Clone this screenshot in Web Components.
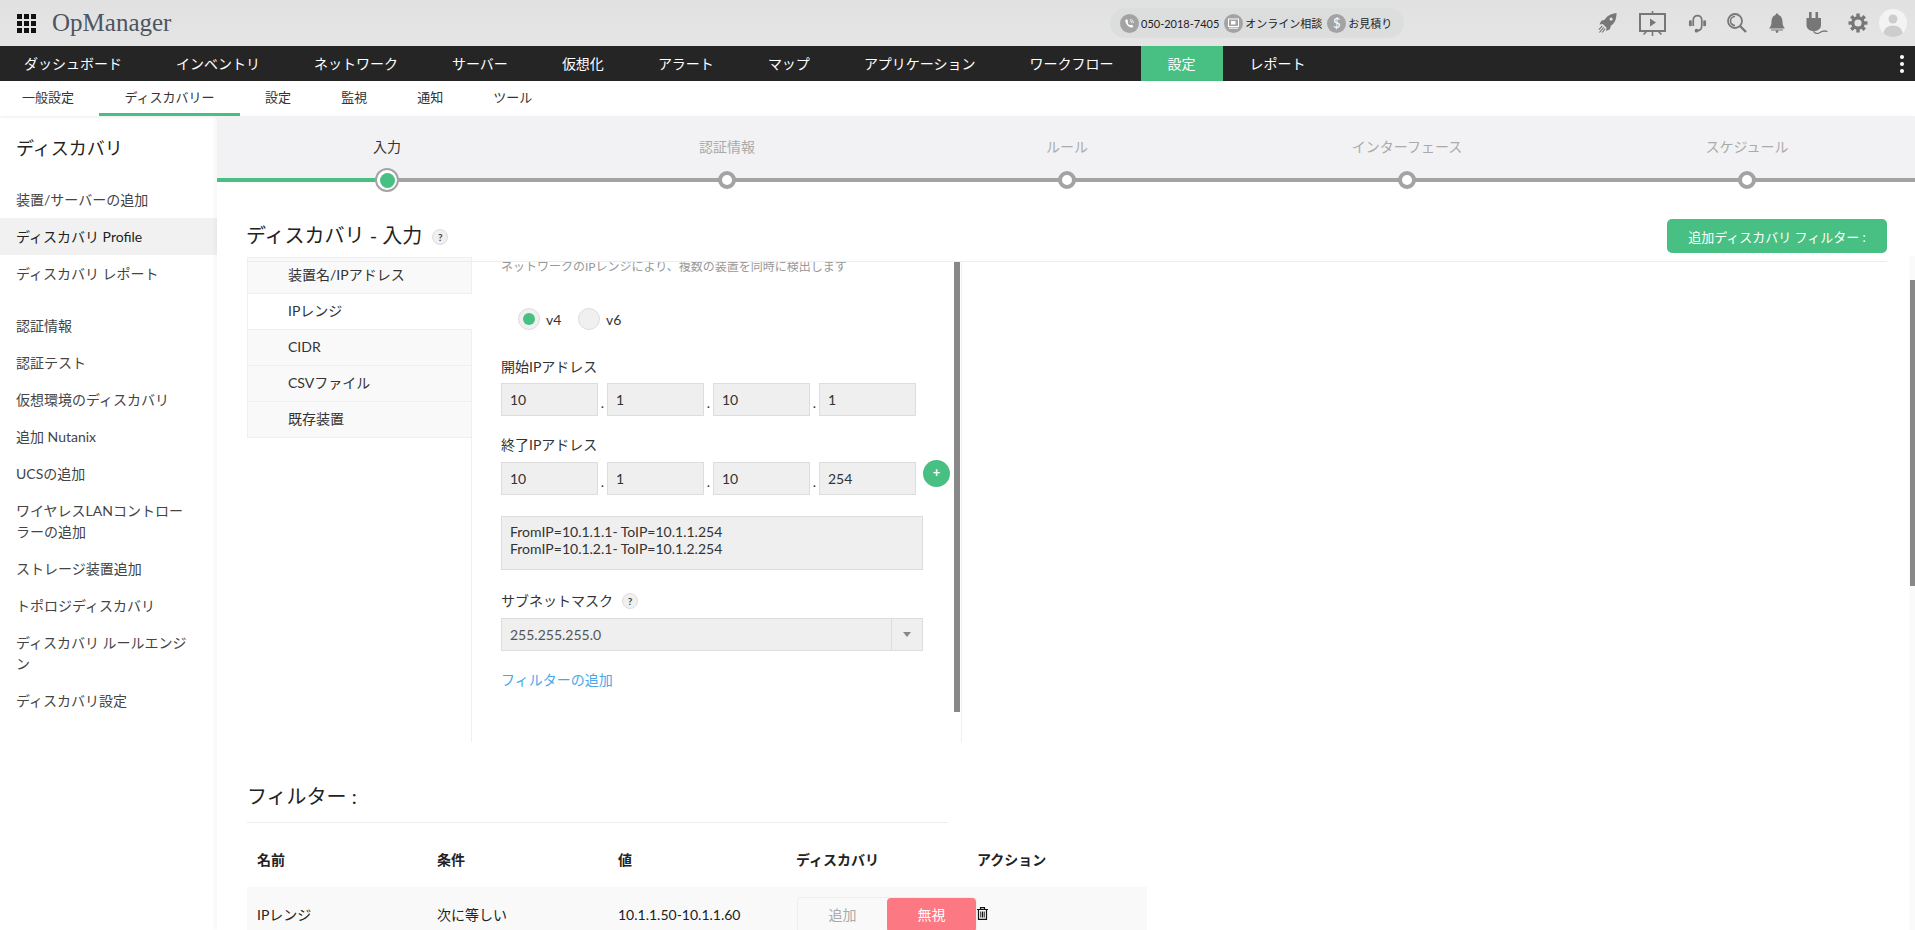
<!DOCTYPE html>
<html lang="ja">
<head>
<meta charset="utf-8">
<title>OpManager</title>
<style>
  html, body { margin: 0; height: 930px; overflow: hidden; background: #fff; }
  body { font-family: Lato, "Noto Sans CJK JP", sans-serif; font-size: 14px; color: #333; }
</style>
</head>
<body>
<op-app></op-app>
<script>
const GREEN = '#48bf83';

const ICONS = {
  rocket: `<svg width="19" height="22" viewBox="0 0 20 22"><path fill="#777" d="M19.5 .5C14 1 9.500 3.500 7 7.500L3.500 8.500 1.500 12.500 5 12 9 16 8.500 19.500 12.500 17.500 13.500 14C18 11.500 19.500 6 19.500 .5Z"/><circle cx="13.800" cy="6.800" r="1.700" fill="#e3e3e3"/><path stroke="#777" stroke-width="1.200" d="M4.500 14 1 18M6 15.500 1.500 21M7.500 17 4.500 21"/></svg>`,
  screen: `<svg width="27" height="25" viewBox="0 0 27 25"><g fill="none" stroke="#777"><rect x="1" y="3" width="25" height="17" stroke-width="2"/><path stroke-width="1.600" d="M13.500 0V3M13.500 20V25M8 20 4.500 23.500M19 20 22.500 23.500"/></g><path fill="#777" d="M11 7.500 17 11.500 11 15.500Z"/></svg>`,
  headset: `<svg width="19" height="21" viewBox="0 0 20 21"><g fill="none" stroke="#777" stroke-width="1.800"><path d="M5.500 13V7C5.500 .5 14.500 .5 14.500 7V12.500C14.500 16 12.500 18 9.500 18"/></g><rect x="1" y="7" width="3" height="6.500" rx="1.300" fill="#777"/><rect x="16" y="7" width="3" height="6.500" rx="1.300" fill="#777"/><circle cx="9" cy="18" r="2" fill="#777"/></svg>`,
  search: `<svg width="20" height="20" viewBox="0 0 20 20"><g fill="none" stroke="#777"><circle cx="8" cy="8" r="7" stroke-width="1.800"/><path stroke-width="1.600" d="M8 3.500A4.500 4.500 0 0 0 8 12.500"/><path stroke-width="2.400" d="M13 13 19 19"/></g></svg>`,
  bell: `<svg width="16" height="20" viewBox="0 0 16 20"><path fill="#777" d="M8 .5C9 .5 9.400 1.200 9.400 2 12.500 3 13.500 6 13.500 9 13.500 12 14.500 14 16 15.500H0C1.500 14 2.500 12 2.500 9 2.500 6 3.500 3 6.600 2 6.600 1.200 7 .5 8 .5Z"/><rect x="2" y="16.500" width="12" height="1" fill="#777"/><circle cx="8" cy="18.600" r="1.300" fill="#777"/></svg>`,
  plug: `<svg width="22" height="22" viewBox="0 0 22 22"><g fill="#777"><rect x="3" y="0" width="2.600" height="6.500"/><rect x="9.500" y="0" width="2.600" height="6.500"/><path d="M.5 6H15V13C15 17 11.500 19 7.700 19 4 19 .5 17 .5 13Z"/></g><path fill="none" stroke="#777" stroke-width="1.300" d="M7.500 18.500C8 22 12 22 14 20.500 16 19 18.500 18.500 21.500 19.500"/></svg>`,
  gear: `<svg width="20" height="20" viewBox="0 0 20 20"><g fill="none" stroke="#777"><circle cx="10" cy="10" r="5.200" stroke-width="3.200"/><g stroke-width="3.400"><path d="M10 .5V4"/><path d="M10 .5V4" transform="rotate(45 10 10)"/><path d="M10 .5V4" transform="rotate(90 10 10)"/><path d="M10 .5V4" transform="rotate(135 10 10)"/><path d="M10 .5V4" transform="rotate(180 10 10)"/><path d="M10 .5V4" transform="rotate(225 10 10)"/><path d="M10 .5V4" transform="rotate(270 10 10)"/><path d="M10 .5V4" transform="rotate(315 10 10)"/></g></g></svg>`,
  avatar: `<svg width="28" height="28" viewBox="0 0 28 28"><defs><clipPath id="a"><circle cx="14" cy="14" r="14"/></clipPath></defs><circle cx="14" cy="14" r="14" fill="#f3f3f3"/><g clip-path="url(#a)" fill="#cdcdcd"><circle cx="14" cy="10" r="4.500"/><path d="M4 28C4 20 8 16.500 14 16.500S24 20 24 28Z"/></g></svg>`,
  phone: `<svg width="19" height="19" viewBox="0 0 19 19"><circle cx="9.500" cy="9.500" r="9.500" fill="#a3a3a3"/><path fill="#fff" d="M5.500 6C6 5.300 6.800 5 7.200 5.600L8 7.200C8.200 7.700 7.800 8 7.500 8.400 7.800 9.500 9 10.800 10.200 11.300 10.600 11 11 10.500 11.500 10.800L13 11.800C13.500 12.200 13.200 12.900 12.600 13.300 11.500 14 9.500 13.500 7.800 11.800 6 10 5 7.500 5.500 6Z"/><path fill="none" stroke="#fff" stroke-width=".8" d="M10 5.500A3.500 3.500 0 0 1 13.500 9M10 7.200A1.800 1.800 0 0 1 11.800 9"/></svg>`,
  video: `<svg width="19" height="19" viewBox="0 0 19 19"><circle cx="9.500" cy="9.500" r="9.500" fill="#a3a3a3"/><rect x="4.500" y="5" width="10" height="7.500" fill="none" stroke="#fff"/><rect x="7" y="7" width="4.500" height="3.500" fill="#fff"/><path stroke="#fff" d="M5 14.200H14"/></svg>`,
  trash: `<svg width="11" height="13" viewBox="0 0 11 13"><g fill="none" stroke="#111"><path stroke-width="1.200" d="M0 2.500H11M3.500 2.500V.7H7.500V2.500"/><path stroke-width="1.200" d="M1.500 2.500V12.400H9.500V2.500"/><path d="M3.800 4.500V10.500M5.500 4.500V10.500M7.200 4.500V10.500"/></g></svg>`
};

class OpIcon extends HTMLElement {
  constructor() {
    super();
    this.attachShadow({ mode: 'open' });
  }

  connectedCallback() {
    this.shadowRoot.innerHTML = `
      <style>
        :host { display: inline-flex; flex: none; }
        svg { display: block; }
      </style>
      ${ICONS[this.getAttribute('name')]}
    `;
  }
}

class OpContact extends HTMLElement {
  constructor() {
    super();
    this.attachShadow({ mode: 'open' });
    this.shadowRoot.innerHTML = `
      <style>
        :host {
          display: flex;
          align-items: center;
          box-sizing: border-box;
          width: 294px;
          height: 30px;
          margin-left: 937px;
          padding: 0 0 0 10px;
          border-radius: 15px;
          background: #dcdddd;
          color: #222;
          font-size: 11px;
          white-space: nowrap;
        }
        .item { display: flex; align-items: center; gap: 2px; margin-right: 5px; }
        .item:last-child { margin-right: 0; }
        .dollar {
          width: 19px;
          height: 19px;
          border-radius: 50%;
          background: #a3a3a3;
          color: #fff;
          font-size: 13px;
          line-height: 19px;
          text-align: center;
        }
      </style>
      <span class="item"><op-icon name="phone"></op-icon>050-2018-7405</span>
      <span class="item"><op-icon name="video"></op-icon>オンライン相談</span>
      <span class="item"><span class="dollar">$</span>お見積り</span>
    `;
  }
}

class OpHeader extends HTMLElement {
  constructor() {
    super();
    this.attachShadow({ mode: 'open' });
    this.shadowRoot.innerHTML = `
      <style>
        :host {
          display: flex;
          align-items: center;
          height: 46px;
          background: linear-gradient(#e1e1e2, #e5e5e6);
        }
        .apps {
          display: grid;
          flex: none;
          grid-template-columns: repeat(3, 5px);
          grid-auto-rows: 5px;
          gap: 2px;
          margin-left: 17px;
        }
        .apps i { background: #111; }
        .brand {
          flex: none;
          margin-left: 16px;
          width: 121px;
          font-family: "Liberation Serif", serif;
          font-size: 25px;
          color: #4d5560;
          white-space: nowrap;
        }
        .i1 { margin-left: 194px; }
        .i2 { margin-left: 22px; }
        .i3 { margin-left: 22px; }
        .i4 { margin-left: 20px; }
        .i5 { margin-left: 22px; }
        .i6 { margin-left: 21px; }
        .i7 { margin-left: 20px; }
        .i8 { margin-left: 11px; }
      </style>
      <div class="apps"><i></i><i></i><i></i><i></i><i></i><i></i><i></i><i></i><i></i></div>
      <div class="brand">OpManager</div>
      <slot></slot>
      <op-icon class="i1" name="rocket"></op-icon>
      <op-icon class="i2" name="screen"></op-icon>
      <op-icon class="i3" name="headset"></op-icon>
      <op-icon class="i4" name="search"></op-icon>
      <op-icon class="i5" name="bell"></op-icon>
      <op-icon class="i6" name="plug"></op-icon>
      <op-icon class="i7" name="gear"></op-icon>
      <op-icon class="i8" name="avatar"></op-icon>
    `;
  }
}

class OpNav extends HTMLElement {
  constructor() {
    super();
    this.attachShadow({ mode: 'open' });
    this.shadowRoot.innerHTML = `
      <style>
        :host {
          display: flex;
          height: 35px;
          background: #252525;
          color: #fff;
          white-space: nowrap;
        }
        .more {
          display: flex;
          flex-direction: column;
          justify-content: center;
          gap: 3px;
          margin-left: auto;
          margin-right: 11px;
        }
        .more i { width: 4px; height: 4px; border-radius: 50%; background: #fff; }
      </style>
      <slot></slot>
      <div class="more"><i></i><i></i><i></i></div>
    `;
  }
}

class OpNavItem extends HTMLElement {
  constructor() {
    super();
    this.attachShadow({ mode: 'open' });
    this.shadowRoot.innerHTML = `
      <style>
        :host { display: block; padding: 0 27px; line-height: 35px; font-size: 14px; }
        :host(:first-child) { padding-left: 24px; }
        :host([active]) { background: ${GREEN}; }
      </style>
      <slot></slot>
    `;
  }
}

class OpSubnav extends HTMLElement {
  constructor() {
    super();
    this.attachShadow({ mode: 'open' });
    this.shadowRoot.innerHTML = `
      <style>
        :host {
          display: flex;
          height: 35px;
          background: #fff;
          box-shadow: 0 1px 3px rgba(0, 0, 0, .08);
          position: relative;
          white-space: nowrap;
        }
      </style>
      <slot></slot>
    `;
  }
}

class OpSubnavItem extends HTMLElement {
  constructor() {
    super();
    this.attachShadow({ mode: 'open' });
    this.shadowRoot.innerHTML = `
      <style>
        :host {
          display: block;
          box-sizing: border-box;
          height: 35px;
          padding: 0 25px;
          line-height: 33px;
          font-size: 13px;
          color: #333;
        }
        :host(:first-child) { padding-left: 22px; }
        :host([active]) { padding: 0 25.500px; border-bottom: 3px solid ${GREEN}; }
      </style>
      <slot></slot>
    `;
  }
}

class OpSidebar extends HTMLElement {
  constructor() {
    super();
    this.attachShadow({ mode: 'open' });
    this.shadowRoot.innerHTML = `
      <style>
        :host {
          display: block;
          flex: none;
          width: 217px;
          padding-top: 20px;
          box-sizing: border-box;
          background: #fff;
        }
        h2 {
          margin: 0 0 21px;
          padding-left: 16px;
          font-size: 18px;
          font-weight: 400;
          line-height: 24px;
          color: #222;
        }
      </style>
      <h2>ディスカバリ</h2>
      <slot></slot>
    `;
  }
}

class OpSideItem extends HTMLElement {
  constructor() {
    super();
    this.attachShadow({ mode: 'open' });
    this.shadowRoot.innerHTML = `
      <style>
        :host {
          display: block;
          padding: 8px 25px 8px 16px;
          font-size: 14px;
          line-height: 21px;
          color: #444;
        }
        :host([active]) { background: #f1f1f1; color: #222; }
        :host([gap]) { margin-top: 15px; }
      </style>
      <slot></slot>
    `;
  }
}

class OpStepper extends HTMLElement {
  constructor() {
    super();
    this.attachShadow({ mode: 'open' });
    this.shadowRoot.innerHTML = `
      <style>
        :host {
          display: grid;
          grid-template-columns: repeat(5, 340px);
          height: 62px;
          background: #f2f2f4;
          border-bottom: 4px solid #a3a3a3;
        }
      </style>
      <slot></slot>
    `;
  }
}

class OpStep extends HTMLElement {
  constructor() {
    super();
    this.attachShadow({ mode: 'open' });
    this.shadowRoot.innerHTML = `
      <style>
        :host {
          display: block;
          position: relative;
          padding-top: 21px;
          text-align: center;
          font-size: 14px;
          line-height: 20px;
          color: #aaa;
        }
        .node {
          position: absolute;
          left: 50%;
          bottom: -11px;
          box-sizing: border-box;
          width: 18px;
          height: 18px;
          margin-left: -9px;
          border: 4px solid #a3a3a3;
          border-radius: 50%;
          background: #fff;
        }
        :host([active]) { color: #333; }
        :host([active])::before {
          content: "";
          position: absolute;
          left: 0;
          bottom: -4px;
          width: 50%;
          height: 4px;
          background: ${GREEN};
        }
        :host([active]) .node {
          width: 24px;
          height: 24px;
          bottom: -14px;
          margin-left: -12px;
          border-width: 2px;
        }
        :host([active]) .node::after {
          content: "";
          position: absolute;
          inset: 2.500px;
          border-radius: 50%;
          background: ${GREEN};
        }
      </style>
      <slot></slot>
      <span class="node"></span>
    `;
  }
}

class OpHelp extends HTMLElement {
  constructor() {
    super();
    this.attachShadow({ mode: 'open' });
    this.shadowRoot.innerHTML = `
      <style>
        :host {
          display: inline-block;
          box-sizing: border-box;
          width: 16px;
          height: 16px;
          border: 1px solid #ddd;
          border-radius: 50%;
          background: #f0f0f0;
          color: #444;
          font-size: 10px;
          font-weight: 700;
          line-height: 14px;
          text-align: center;
        }
      </style>
      ?
    `;
  }
}

class OpTabs extends HTMLElement {
  constructor() {
    super();
    this.attachShadow({ mode: 'open' });
    this.shadowRoot.innerHTML = `
      <style>
        :host {
          display: flex;
          flex-direction: column;
          flex: none;
          box-sizing: border-box;
          width: 225px;
          border-top: 1px solid #efefef;
        }
        .fill { flex: 1; border-right: 1px solid #efefef; }
      </style>
      <slot></slot>
      <div class="fill"></div>
    `;
  }
}

class OpTab extends HTMLElement {
  constructor() {
    super();
    this.attachShadow({ mode: 'open' });
    this.shadowRoot.innerHTML = `
      <style>
        :host {
          display: block;
          box-sizing: border-box;
          height: 36px;
          padding-left: 40px;
          border-left: 1px solid #efefef;
          border-right: 1px solid #efefef;
          border-bottom: 1px solid #efefef;
          background: #f9f9f9;
          font-size: 14px;
          line-height: 34px;
          color: #333;
        }
        :host([active]) { background: #fff; border-right-color: #fff; }
      </style>
      <slot></slot>
    `;
  }
}

class OpRadio extends HTMLElement {
  constructor() {
    super();
    this.attachShadow({ mode: 'open' });
    this.shadowRoot.innerHTML = `
      <style>
        :host { display: flex; align-items: center; gap: 6px; font-size: 14px; color: #333; }
        .dot {
          display: flex;
          align-items: center;
          justify-content: center;
          box-sizing: border-box;
          width: 22px;
          height: 22px;
          border: 1px solid #ddd;
          border-radius: 50%;
          background: #f0f0f0;
        }
        :host([checked]) .dot::after {
          content: "";
          width: 12px;
          height: 12px;
          border-radius: 50%;
          background: ${GREEN};
        }
      </style>
      <span class="dot"></span>
      <slot></slot>
    `;
  }
}

class OpIpRow extends HTMLElement {
  constructor() {
    super();
    this.attachShadow({ mode: 'open' });
  }

  connectedCallback() {
    const parts = this.getAttribute('value').split('.');
    this.shadowRoot.innerHTML = `
      <style>
        :host { display: flex; position: relative; height: 33px; margin-top: var(--top, 6px); }
        .octet {
          box-sizing: border-box;
          width: 97px;
          height: 33px;
          padding-left: 8px;
          border: 1px solid #ddd;
          background: #efefef;
          font-size: 14px;
          line-height: 31px;
          color: #333;
        }
        .sep { width: 9px; height: 33px; text-align: center; font-size: 14px; line-height: 40px; color: #333; }
        ::slotted(*) { position: absolute; left: 422px; top: -2px; }
      </style>
      ${parts.map(p => `<div class="octet">${p}</div>`).join('<div class="sep">.</div>')}
      <slot></slot>
    `;
  }
}

class OpAddButton extends HTMLElement {
  constructor() {
    super();
    this.attachShadow({ mode: 'open' });
    this.shadowRoot.innerHTML = `
      <style>
        :host {
          display: block;
          width: 27px;
          height: 27px;
          border-radius: 50%;
          background: ${GREEN};
          color: #fff;
          font-size: 13px;
          font-weight: 700;
          line-height: 25px;
          text-align: center;
        }
      </style>
      +
    `;
  }
}

class OpSelect extends HTMLElement {
  constructor() {
    super();
    this.attachShadow({ mode: 'open' });
    this.shadowRoot.innerHTML = `
      <style>
        :host {
          display: flex;
          box-sizing: border-box;
          width: 422px;
          height: 33px;
          border: 1px solid #ddd;
          background: #efefef;
          font-size: 14px;
          line-height: 31px;
          color: #555;
        }
        .value { flex: 1; padding-left: 8px; }
        .arrow {
          display: flex;
          align-items: center;
          justify-content: center;
          width: 30px;
          border-left: 1px solid #ddd;
        }
        .arrow::after {
          content: "";
          border: 4px solid transparent;
          border-top: 5px solid #888;
          border-bottom: 0;
        }
      </style>
      <div class="value"><slot></slot></div>
      <div class="arrow"></div>
    `;
  }
}

class OpIpForm extends HTMLElement {
  constructor() {
    super();
    this.attachShadow({ mode: 'open' });
    this.shadowRoot.innerHTML = `
      <style>
        :host {
          display: block;
          position: relative;
          box-sizing: border-box;
          width: 490px;
          height: 480px;
          margin-top: 5px;
          padding-left: 29px;
          border-right: 1px solid #efefef;
          overflow: hidden;
        }
        .thumb {
          position: absolute;
          left: 482px;
          top: 0;
          width: 6px;
          height: 450px;
          background: #888;
        }
        .hint { margin-top: -4px; font-size: 12px; line-height: 18px; color: #999; white-space: nowrap; }
        .radios { display: flex; margin: 32px 0 0 17px; }
        .radios op-radio:first-child { width: 60px; }
        label { display: block; font-size: 14px; line-height: 20px; color: #333; }
        .l1 { margin-top: 27px; }
        .l2 { margin-top: 19px; }
        .ranges {
          box-sizing: border-box;
          width: 422px;
          height: 54px;
          margin-top: 21px;
          padding: 6px 8px;
          border: 1px solid #ddd;
          background: #efefef;
          font-size: 14px;
          line-height: 17px;
          color: #333;
        }
        .l3 { display: flex; align-items: center; gap: 9px; margin: 21px 0 7px; }
        a { display: block; margin-top: 19px; font-size: 14px; line-height: 20px; color: #4aa8ea; text-decoration: none; }
      </style>
      <div class="thumb"></div>
      <div class="hint">ネットワークのIPレンジにより、複数の装置を同時に検出します</div>
      <div class="radios">
        <op-radio checked>v4</op-radio>
        <op-radio>v6</op-radio>
      </div>
      <label class="l1">開始IPアドレス</label>
      <op-ip-row value="10.1.10.1"></op-ip-row>
      <label class="l2">終了IPアドレス</label>
      <op-ip-row style="--top:7px" value="10.1.10.254"><op-add-button></op-add-button></op-ip-row>
      <div class="ranges">FromIP=10.1.1.1- ToIP=10.1.1.254<br>FromIP=10.1.2.1- ToIP=10.1.2.254</div>
      <label class="l3">サブネットマスク <op-help></op-help></label>
      <op-select>255.255.255.0</op-select>
      <a href="#">フィルターの追加</a>
    `;
  }
}

class OpFilterTable extends HTMLElement {
  constructor() {
    super();
    this.attachShadow({ mode: 'open' });
    this.shadowRoot.innerHTML = `
      <style>
        :host { display: block; margin-top: 39px; }
        h3 {
          box-sizing: border-box;
          width: 701px;
          height: 42px;
          margin: 0;
          padding: 1px 0 10px;
          border-bottom: 1px solid #eee;
          font-size: 20px;
          font-weight: 400;
          line-height: 28px;
          color: #222;
        }
        .row {
          display: grid;
          grid-template-columns: 180px 181px 178px 181px 1fr;
          align-items: center;
          width: 900px;
          padding-left: 10px;
          box-sizing: border-box;
          white-space: nowrap;
        }
        .head { height: 64px; padding-top: 8px; font-weight: 700; color: #222; }
        .body { height: 56px; background: #f9f9f9; color: #222; }
        .body .cell { margin-top: -2px; }
        .toggle {
          display: flex;
          box-sizing: border-box;
          width: 180px;
          height: 36px;
          margin-left: 1px;
          border: 1px solid #eee;
          border-radius: 4px;
          line-height: 34px;
          text-align: center;
        }
        .toggle span { flex: 1; color: #aaa; }
        .toggle .off { background: #fc7883; color: #fff; border-radius: 4px; }
      </style>
      <h3>フィルター :</h3>
      <div class="row head"><div>名前</div><div>条件</div><div>値</div><div>ディスカバリ</div><div>アクション</div></div>
      <div class="row body">
        <div class="cell">IPレンジ</div>
        <div class="cell">次に等しい</div>
        <div class="cell">10.1.1.50-10.1.1.60</div>
        <div class="toggle"><span>追加</span><span class="off">無視</span></div>
        <div class="cell"><op-icon name="trash"></op-icon></div>
      </div>
    `;
  }
}

class OpDiscovery extends HTMLElement {
  constructor() {
    super();
    this.attachShadow({ mode: 'open' });
    this.shadowRoot.innerHTML = `
      <style>
        :host {
          display: block;
          position: relative;
          flex: 1;
          min-width: 0;
          background: #fff;
          box-shadow: -2px 0 4px rgba(0, 0, 0, .04);
        }
        .content { padding: 37px 28px 0 30px; }
        .title { display: flex; align-items: center; height: 34px; }
        h1 { margin: -3px 0 0 -1px; font-size: 20px; font-weight: 400; line-height: 28px; color: #222; }
        op-help { margin: 1px 0 0 10px; }
        button {
          margin-left: auto;
          width: 220px;
          height: 34px;
          padding: 0;
          border: 0;
          border-radius: 5px;
          background: ${GREEN};
          color: #fff;
          font: inherit;
          font-size: 13px;
        }
        .panel { display: flex; position: relative; margin-top: 4px; }
        .panel::before {
          content: "";
          position: absolute;
          left: 0;
          right: 0;
          top: 4px;
          height: 1px;
          background: #ececec;
        }
        .scroll {
          position: absolute;
          right: 0;
          top: 140px;
          box-sizing: border-box;
          width: 6px;
          height: 674px;
          padding-left: 1px;
          background: #fafafa;
        }
        .scroll i {
          display: block;
          height: 306px;
          margin-top: 24px;
          background: #888;
        }
      </style>
      <op-stepper>
        <op-step active>入力</op-step>
        <op-step>認証情報</op-step>
        <op-step>ルール</op-step>
        <op-step>インターフェース</op-step>
        <op-step>スケジュール</op-step>
      </op-stepper>
      <div class="content">
        <div class="title">
          <h1>ディスカバリ - 入力</h1>
          <op-help></op-help>
          <button>追加ディスカバリ フィルター :</button>
        </div>
        <div class="panel">
          <op-tabs>
            <op-tab>装置名/IPアドレス</op-tab>
            <op-tab active>IPレンジ</op-tab>
            <op-tab>CIDR</op-tab>
            <op-tab>CSVファイル</op-tab>
            <op-tab>既存装置</op-tab>
          </op-tabs>
          <op-ip-form></op-ip-form>
        </div>
        <op-filter-table></op-filter-table>
      </div>
      <div class="scroll"><i></i></div>
    `;
  }
}

class OpApp extends HTMLElement {
  constructor() {
    super();
    this.attachShadow({ mode: 'open' });
    this.shadowRoot.innerHTML = `
      <style>
        :host { display: block; width: 1915px; height: 930px; overflow: hidden; }
        .body { display: flex; height: 814px; }
      </style>
      <op-header><op-contact></op-contact></op-header>
      <op-nav>
        <op-nav-item>ダッシュボード</op-nav-item>
        <op-nav-item>インベントリ</op-nav-item>
        <op-nav-item>ネットワーク</op-nav-item>
        <op-nav-item>サーバー</op-nav-item>
        <op-nav-item>仮想化</op-nav-item>
        <op-nav-item>アラート</op-nav-item>
        <op-nav-item>マップ</op-nav-item>
        <op-nav-item>アプリケーション</op-nav-item>
        <op-nav-item>ワークフロー</op-nav-item>
        <op-nav-item active>設定</op-nav-item>
        <op-nav-item>レポート</op-nav-item>
      </op-nav>
      <op-subnav>
        <op-subnav-item>一般設定</op-subnav-item>
        <op-subnav-item active>ディスカバリー</op-subnav-item>
        <op-subnav-item>設定</op-subnav-item>
        <op-subnav-item>監視</op-subnav-item>
        <op-subnav-item>通知</op-subnav-item>
        <op-subnav-item>ツール</op-subnav-item>
      </op-subnav>
      <div class="body">
        <op-sidebar>
          <op-side-item>装置/サーバーの追加</op-side-item>
          <op-side-item active>ディスカバリ Profile</op-side-item>
          <op-side-item>ディスカバリ レポート</op-side-item>
          <op-side-item gap>認証情報</op-side-item>
          <op-side-item>認証テスト</op-side-item>
          <op-side-item>仮想環境のディスカバリ</op-side-item>
          <op-side-item>追加 Nutanix</op-side-item>
          <op-side-item>UCSの追加</op-side-item>
          <op-side-item>ワイヤレスLANコントローラーの追加</op-side-item>
          <op-side-item>ストレージ装置追加</op-side-item>
          <op-side-item>トポロジディスカバリ</op-side-item>
          <op-side-item>ディスカバリ ルールエンジン</op-side-item>
          <op-side-item>ディスカバリ設定</op-side-item>
        </op-sidebar>
        <op-discovery></op-discovery>
      </div>
    `;
  }
}

customElements.define('op-icon', OpIcon);
customElements.define('op-contact', OpContact);
customElements.define('op-header', OpHeader);
customElements.define('op-nav', OpNav);
customElements.define('op-nav-item', OpNavItem);
customElements.define('op-subnav', OpSubnav);
customElements.define('op-subnav-item', OpSubnavItem);
customElements.define('op-sidebar', OpSidebar);
customElements.define('op-side-item', OpSideItem);
customElements.define('op-stepper', OpStepper);
customElements.define('op-step', OpStep);
customElements.define('op-help', OpHelp);
customElements.define('op-tabs', OpTabs);
customElements.define('op-tab', OpTab);
customElements.define('op-radio', OpRadio);
customElements.define('op-ip-row', OpIpRow);
customElements.define('op-add-button', OpAddButton);
customElements.define('op-select', OpSelect);
customElements.define('op-ip-form', OpIpForm);
customElements.define('op-filter-table', OpFilterTable);
customElements.define('op-discovery', OpDiscovery);
customElements.define('op-app', OpApp);
</script>
</body>
</html>
